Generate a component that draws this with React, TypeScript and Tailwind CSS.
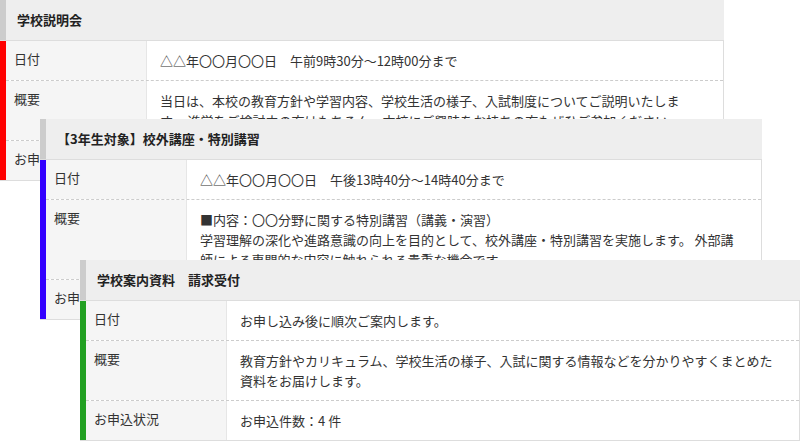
import React from "react";

type Row = { label: string; lines: string[] };

type CardProps = {
  title: string;
  bar: string;
  rows: Row[];
  pos: string;
};

function Card({ title, bar, rows, pos }: CardProps) {
  return (
    <div className={`absolute ${pos} bg-white`}>
      <div className="flex h-[41px] border-b border-[#dddddd] bg-[#eeeeee]">
        <div className="w-[6px] bg-[#cccccc]" />
        <div className="flex items-center pl-[11px] text-[13px] font-bold text-[#222222]">{title}</div>
      </div>
      <div className="flex border-r border-b border-[#dddddd]">
        <div className={`w-[6px] shrink-0 ${bar}`} />
        <div className="flex flex-1 flex-col">
          {rows.map((r, i) => (
            <div
              key={i}
              className={`flex ${i < rows.length - 1 ? "border-b border-dashed border-[#cccccc]" : ""}`}
            >
              <div className="w-[141px] shrink-0 border-r border-[#e6e6e6] bg-[#f5f5f5] pl-[8px] pt-[8px] text-[13px] leading-[20px] text-[#333333]">
                {r.label}
              </div>
              <div className="flex-1 pl-[13px] pr-[10px] pt-[10px] pb-[9px] text-[13px] leading-[20px] text-[#333333] whitespace-nowrap">
                {r.lines.map((l, j) => (
                  <div key={j}>{l}</div>
                ))}
              </div>
            </div>
          ))}
        </div>
      </div>
    </div>
  );
}

export default function App() {
  return (
    <div
      className="relative h-[442px] w-[800px] overflow-hidden bg-white"
      style={{ fontFamily: '"Noto Sans CJK JP", "Noto Sans", sans-serif' }}
    >
      <Card
        pos="left-0 top-0 w-[724px]"
        title="学校説明会"
        bar="bg-[#ff0000]"
        rows={[
          { label: "日付", lines: ["△△年〇〇月〇〇日　午前9時30分～12時00分まで"] },
          {
            label: "概要",
            lines: [
              "当日は、本校の教育方針や学習内容、学校生活の様子、入試制度についてご説明いたしま",
              "す。 進学をご検討中の方はもちろん、本校にご興味をお持ちの方もぜひご参加ください。",
            ],
          },
          { label: "お申込状況", lines: ["お申込件数：12 件"] },
        ]}
      />
      <Card
        pos="left-[40px] top-[119px] w-[722px]"
        title="【3年生対象】校外講座・特別講習"
        bar="bg-[#3300ff]"
        rows={[
          { label: "日付", lines: ["△△年〇〇月〇〇日　午後13時40分～14時40分まで"] },
          {
            label: "概要",
            lines: [
              "■内容：〇〇分野に関する特別講習（講義・演習）",
              "学習理解の深化や進路意識の向上を目的として、校外講座・特別講習を実施します。 外部講",
              "師による専門的な内容に触れられる貴重な機会です。",
            ],
          },
          { label: "お申込状況", lines: ["お申込件数：8 件"] },
        ]}
      />
      <Card
        pos="left-[80px] top-[260px] w-[720px]"
        title="学校案内資料　請求受付"
        bar="bg-[#22a022]"
        rows={[
          { label: "日付", lines: ["お申し込み後に順次ご案内します。"] },
          {
            label: "概要",
            lines: [
              "教育方針やカリキュラム、学校生活の様子、入試に関する情報などを分かりやすくまとめた",
              "資料をお届けします。",
            ],
          },
          { label: "お申込状況", lines: ["お申込件数：4 件"] },
        ]}
      />
    </div>
  );
}
